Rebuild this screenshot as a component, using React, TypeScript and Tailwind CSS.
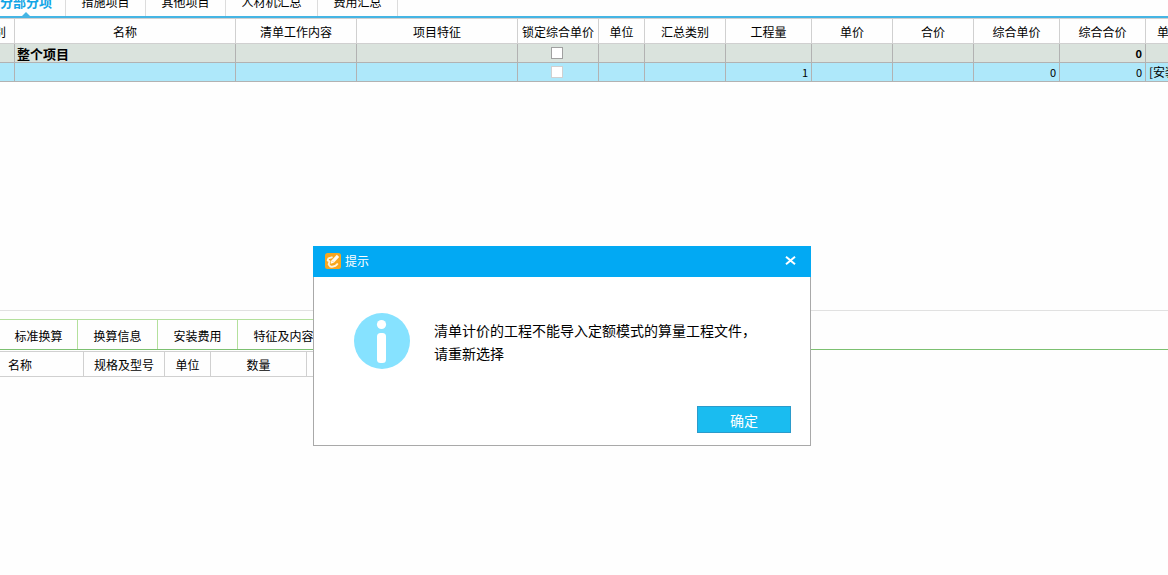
import { useState } from "react";
import type { ReactNode } from "react";
import clsx from "clsx";

const mainTabs = [
  { name: "分部分项", width: "w-[66px]" },
  { name: "措施项目", width: "w-[80px]" },
  { name: "其他项目", width: "w-[80px]" },
  { name: "人材机汇总", width: "w-[92px]" },
  { name: "费用汇总", width: "w-[80px]" },
];

const columns = [
  { title: "别", width: "w-[15px]" },
  { title: "名称", width: "w-[221px]" },
  { title: "清单工作内容", width: "w-[121px]" },
  { title: "项目特征", width: "w-[161px]" },
  { title: "锁定综合单价", width: "w-[81px]" },
  { title: "单位", width: "w-[46px]" },
  { title: "汇总类别", width: "w-[81px]" },
  { title: "工程量", width: "w-[86px]" },
  { title: "单价", width: "w-[81px]" },
  { title: "合价", width: "w-[81px]" },
  { title: "综合单价", width: "w-[86px]" },
  { title: "综合合价", width: "w-[86px]" },
  { title: "单", width: "" },
];

const detailTabs = [
  { name: "标准换算", width: "w-[78px]" },
  { name: "换算信息", width: "w-[80px]" },
  { name: "安装费用", width: "w-[80px]" },
  { name: "特征及内容", width: "w-[92px]" },
];

const detailColumns = [
  { title: "名称", width: "w-[84px]" },
  { title: "规格及型号", width: "w-[81px]" },
  { title: "单位", width: "w-[46px]" },
  { title: "数量", width: "w-[96px]" },
];

const Cell = ({ children, right }: { children?: ReactNode; right?: boolean }) => (
  <td
    className={clsx(
      "h-[19px] overflow-hidden whitespace-nowrap border-r border-b border-[#b2b2b2] px-[3px] py-0 leading-4 last:border-r-0",
      right && "text-right text-[11px]"
    )}
  >
    {children}
  </td>
);

const LockBox = ({ label, disabled }: { label: string; disabled?: boolean }) => (
  <input
    type="checkbox"
    aria-label={label}
    disabled={disabled}
    className={clsx(
      "ml-[30px] block size-3 appearance-none border bg-white checked:bg-[#02a9f3]",
      disabled ? "border-[#d0d0d0]" : "border-[#a0a0a0]"
    )}
  />
);

const MainTabs = () => {
  const [active, setActive] = useState(0);

  return (
    <nav className="flex h-[18px] items-end overflow-hidden border-b-2 border-[#45b5e4]">
      {mainTabs.map((tab, i) => (
        <button
          key={tab.name}
          type="button"
          onClick={() => setActive(i)}
          className={clsx(
            "relative h-7 shrink-0 whitespace-nowrap border-r border-[#dcdcdc]",
            tab.width,
            i === 0 && "pr-[14px]",
            i === active && "text-[13px] font-bold text-[#12a5e6]"
          )}
        >
          {tab.name}
          {i === active && (
            <svg
              viewBox="0 0 8 4"
              className="absolute bottom-0 left-[22px] h-1 w-2 fill-[#45b5e4]"
            >
              <path d="M0 4 4 0l4 4z" />
            </svg>
          )}
        </button>
      ))}
    </nav>
  );
};

const ProjectTable = () => (
  <table className="w-full table-fixed border-separate border-spacing-0 border-t border-[#d0d0d0]">
    <thead>
      <tr>
        {columns.map((c, i) => (
          <th
            key={i}
            className={clsx(
              "h-[25px] overflow-hidden whitespace-nowrap border-r border-b border-[#d0d0d0] px-0 pt-0.5 pb-0 font-normal last:border-r-0",
              c.width
            )}
          >
            {i === 0 ? (
              <div className="flex justify-end pr-2">{c.title}</div>
            ) : i === columns.length - 1 ? (
              <div className="pl-[11px] text-left">{c.title}</div>
            ) : (
              c.title
            )}
          </th>
        ))}
      </tr>
    </thead>
    <tbody>
      <tr className="bg-[#dae3dd] text-[13px] font-bold">
        <Cell />
        <td className="h-[19px] whitespace-nowrap border-r border-b border-[#b2b2b2] px-0.5 pt-0.5 pb-0 leading-4">
          整个项目
        </td>
        <Cell />
        <Cell />
        <Cell>
          <LockBox label="锁定综合单价" />
        </Cell>
        <Cell />
        <Cell />
        <Cell />
        <Cell />
        <Cell />
        <Cell />
        <Cell right>0</Cell>
        <Cell />
      </tr>
      <tr className="bg-[#aee8fa]">
        <Cell />
        <Cell />
        <Cell />
        <Cell />
        <Cell>
          <LockBox label="锁定综合单价" disabled />
        </Cell>
        <Cell />
        <Cell />
        <Cell right>1</Cell>
        <Cell />
        <Cell />
        <Cell right>0</Cell>
        <Cell right>0</Cell>
        <Cell>[安装</Cell>
      </tr>
    </tbody>
  </table>
);

const DetailPanel = () => (
  <section className="h-[265px] shrink-0 border-t border-[#e1e1e1] pt-2">
    <nav className="flex border-b border-[#7cc070]">
      {detailTabs.map((tab) => (
        <button
          key={tab.name}
          type="button"
          className={clsx(
            "h-[30px] shrink-0 whitespace-nowrap border-t border-r border-[#b3e09c] pt-0.5",
            tab.width
          )}
        >
          {tab.name}
        </button>
      ))}
    </nav>
    <table className="mt-px table-fixed border-separate border-spacing-0 border-t border-[#d0d0d0]">
      <thead>
        <tr>
          {detailColumns.map((c, i) => (
            <th
              key={c.title}
              className={clsx(
                "h-[25px] whitespace-nowrap border-r border-b border-[#d0d0d0] pt-0.5 pb-0 font-normal",
                c.width,
                i === 0 ? "px-2 text-left" : "px-0"
              )}
            >
              {c.title}
            </th>
          ))}
          <td className="w-24 border-b border-[#d0d0d0]" />
        </tr>
      </thead>
    </table>
  </section>
);

const AppIcon = () => (
  <svg viewBox="0 0 16 16" className="size-4">
    <rect width="16" height="16" rx="2.5" fill="#f9a61c" />
    <path
      d="M7.6 4.2 3.4 5.4 2.6 7.4l2 1-1 3 1.8 2.2c3 .6 5.6-.4 7.4-3"
      stroke="#fff3dc"
      strokeWidth="1.8"
      strokeLinejoin="round"
      fill="none"
    />
    <path d="m5.6 10.8.8-3.4 5.4-5.6 2.4 2.2-5.4 5.8z" fill="#fffaf0" />
    <path d="m7.6 8.2 1.2 1.2" stroke="#f6b648" strokeWidth=".8" />
  </svg>
);

const MessageDialog = ({ onClose }: { onClose: () => void }) => (
  <div
    role="dialog"
    aria-labelledby="dialog-title"
    className="absolute top-[246px] left-[313px] w-[498px] bg-white"
  >
    {/* Title bar */}
    <div className="flex h-[31px] items-center bg-[#02a9f3] pr-[14px] pb-0.5 pl-3 text-white">
      <AppIcon />
      <h2 id="dialog-title" className="ml-1 flex-1">
        提示
      </h2>
      <button type="button" aria-label="关闭" onClick={onClose}>
        <svg viewBox="0 0 13 9" className="h-[9px] w-[13px]">
          <path d="m2 .8 9 7.4M11 .8 2 8.2" stroke="#fff" strokeWidth="2" fill="none" />
        </svg>
      </button>
    </div>

    {/* Message */}
    <div className="border-x border-b border-[#a9a9a9] pb-3">
      <div className="flex items-start pt-9 pl-10">
        <svg viewBox="0 0 56 56" className="size-14 shrink-0">
          <circle cx="28" cy="28" r="28" fill="#86e2ff" />
          <circle cx="27.5" cy="11.5" r="4.6" fill="#fff" />
          <rect x="23" y="20" width="9" height="30" rx="3.5" fill="#fff" />
        </svg>
        <p className="mt-1.5 ml-6 text-sm leading-[23px] whitespace-nowrap">
          清单计价的工程不能导入定额模式的算量工程文件，
          <br />
          请重新选择
        </p>
      </div>
      <div className="mt-[37px] flex justify-end pr-[19px]">
        <button
          type="button"
          onClick={onClose}
          className="h-[27px] w-[94px] border border-[#2b9bcb] bg-[#1abcf0] text-sm leading-5 text-white"
        >
          确定
        </button>
      </div>
    </div>
  </div>
);

export default function App() {
  const [showDialog, setShowDialog] = useState(true);

  return (
    <div className="relative flex min-h-screen flex-col overflow-hidden bg-[#fefefe] font-['Noto_Sans_CJK_SC',sans-serif] text-xs text-black">
      <MainTabs />
      <main className="flex-1">
        <ProjectTable />
      </main>
      <DetailPanel />
      {showDialog && <MessageDialog onClose={() => setShowDialog(false)} />}
    </div>
  );
}
